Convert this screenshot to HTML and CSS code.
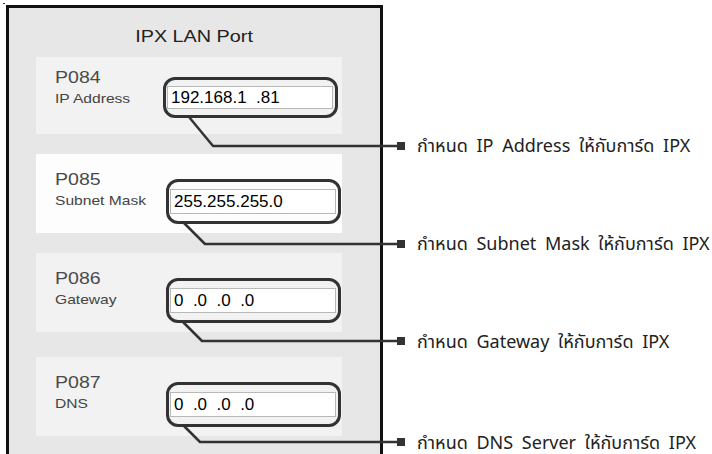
FILE: index.html
```html
<!DOCTYPE html>
<html>

<head>
    <title>IPX LAN Port</title>
    <meta name="viewport" content="width=device-width, initial-scale=1">
    <link rel="stylesheet" href="styles.css">
</head>

<body>
    <div class="page">
        <div class="panel">
            <div class="panel-title"><span class="stretch">IPX LAN Port</span></div>

            <div class="rows">
                <div class="row row-first">
                    <div class="row-label">
                        <div class="code"><span class="stretch">P084</span></div>
                        <div class="name"><span class="stretch">IP Address</span></div>
                    </div>
                    <div class="callout"><input class="ip" type="text" value="192.168.1  .81"></div>
                </div>

                <div class="row row-white">
                    <div class="row-label">
                        <div class="code"><span class="stretch">P085</span></div>
                        <div class="name"><span class="stretch">Subnet Mask</span></div>
                    </div>
                    <div class="callout"><input class="ip" type="text" value="255.255.255.0"></div>
                </div>

                <div class="row">
                    <div class="row-label">
                        <div class="code"><span class="stretch">P086</span></div>
                        <div class="name"><span class="stretch">Gateway</span></div>
                    </div>
                    <div class="callout"><input class="ip" type="text" value="0  .0  .0  .0"></div>
                </div>

                <div class="row row-last">
                    <div class="row-label">
                        <div class="code"><span class="stretch">P087</span></div>
                        <div class="name"><span class="stretch">DNS</span></div>
                    </div>
                    <div class="callout"><input class="ip" type="text" value="0  .0  .0  .0"></div>
                </div>
            </div>
        </div>

        <div class="notes">
            <div class="note">กำหนด IP Address ให้กับการ์ด IPX</div>
            <div class="note">กำหนด Subnet Mask ให้กับการ์ด IPX</div>
            <div class="note">กำหนด Gateway ให้กับการ์ด IPX</div>
            <div class="note note-last">กำหนด DNS Server ให้กับการ์ด IPX</div>
        </div>

        <!-- leader lines from each field to its note -->
        <svg class="leaders" width="712" height="454" viewBox="0 0 712 454">
            <rect x="3" y="3" width="2" height="1" fill="#333" />
            <g fill="none" stroke="#333" stroke-width="2.5" stroke-linejoin="round">
                <polyline points="189,117 213,146 399,146" />
                <polyline points="183,222 205,244 399,244" />
                <polyline points="183,322 202,341 399,341" />
                <polyline points="184,426 200,442 399,442" />
            </g>
            <g fill="#333">
                <rect x="397" y="142" width="8" height="8" />
                <rect x="397" y="240" width="8" height="8" />
                <rect x="397" y="337" width="8" height="8" />
                <rect x="397" y="438" width="8" height="8" />
            </g>
        </svg>
    </div>
</body>

</html>
```

FILE: styles.css
```css
body {
    margin: 0;
    padding: 0;
    background: #fff;
    font-family: "Liberation Sans", Arial, sans-serif;
    overflow: hidden;
}

.page {
    position: relative;
    display: flex;
    align-items: flex-start;
    width: 712px;
    height: 454px;
    overflow: hidden;
}

/* the screenshot text is a bit wider than plain Arial */
.stretch {
    display: inline-block;
    transform: scaleX(1.2);
    transform-origin: left center;
    white-space: nowrap;
}

.panel {
    flex: none;
    box-sizing: border-box;
    width: 377px;
    height: 452px;
    margin: 5px 0 0 6px;
    border: 3px solid #111;
    background-color: #e7e7e7;
}

.panel-title {
    margin-top: 18px;
    font-size: 16.5px;
    line-height: 20px;
    color: #222;
    text-align: center;
}

.panel-title .stretch {
    transform-origin: center;
}

.rows {
    display: flex;
    flex-direction: column;
    gap: 20px;
    margin: 11px 0 0 27px;
    width: 306px;
}

.row {
    display: flex;
    align-items: flex-start;
    height: 79px;
    background-color: #f2f2f2;
}

.row-white {
    background-color: #fdfdfd;
}

.row-label {
    box-sizing: border-box;
    width: 130px;
    padding: 16px 0 0 19px;
}

.code {
    font-size: 17px;
    line-height: 19px;
    color: #4a4a4a;
}

.code .stretch {
    transform: scaleX(1.15);
}

.name {
    margin-top: 4px;
    font-size: 13px;
    line-height: 16px;
    color: #444;
}

.callout {
    box-sizing: border-box;
    width: 175px;
    margin-top: 25px;
    padding: 7px 2px 7px 1px;
    border: 3px solid #333;
    border-radius: 12px;
}

.ip {
    display: block;
    box-sizing: border-box;
    width: 166px;
    height: 25px;
    margin: 0;
    padding: 0 3px;
    border: 1px solid #b8b8b8;
    background: #fff;
    font-family: "Liberation Sans", Arial, sans-serif;
    font-size: 17px;
    color: #000;
    outline: none;
}

/* first block sits a little higher in the shot */
.row-first {
    height: 77px;
}

.row-first .row-label {
    width: 127px;
    padding-top: 11px;
}

.row-first .callout {
    margin-top: 20px;
    padding-top: 6px;
    padding-bottom: 6px;
}

.row-first .ip {
    height: 23px;
}

.row-last {
    margin-top: 5px;
}

.notes {
    display: flex;
    flex-direction: column;
    gap: 74px;
    margin-left: 34px;
    padding-top: 133px;
}

.note {
    height: 24px;
    font-family: "Noto Sans", "Noto Sans Thai", "DejaVu Sans", sans-serif;
    font-size: 18px;
    line-height: 24px;
    word-spacing: 4px;
    color: #222;
    white-space: nowrap;
}

.note-last {
    margin-top: 3px;
}

.leaders {
    position: absolute;
    top: 0;
    left: 0;
    pointer-events: none;
}
```
